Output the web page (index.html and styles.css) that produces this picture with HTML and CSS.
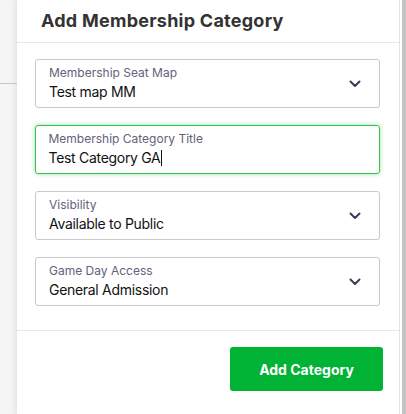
FILE: index.html
```html
<!DOCTYPE html>
<html lang="en">
<head>
<meta charset="utf-8">
<title>Add Membership Category</title>
<link rel="stylesheet" href="styles.css">
</head>
<body>
<div class="page">
  <div class="gutter"><div class="gutter-line"></div></div>
  <section class="panel">
    <header class="panel-header">
      <h1 class="panel-title">Add Membership Category</h1>
    </header>
    <div class="panel-body">
      <div class="field">
        <div class="field-text">
          <div class="field-label">Membership Seat Map</div>
          <div class="field-value">Test map MM</div>
        </div>
        <svg class="chevron" width="12" height="8" viewBox="0 0 12 8"><polyline points="1.5,1.5 6,6 10.5,1.5" fill="none" stroke="#3b3b55" stroke-width="2" stroke-linecap="round" stroke-linejoin="round"/></svg>
      </div>
      <div class="field field-focus">
        <div class="field-text">
          <div class="field-label">Membership Category Title</div>
          <div class="field-value">Test Category GA<span class="caret"></span></div>
        </div>
      </div>
      <div class="field">
        <div class="field-text">
          <div class="field-label">Visibility</div>
          <div class="field-value">Available to Public</div>
        </div>
        <svg class="chevron" width="12" height="8" viewBox="0 0 12 8"><polyline points="1.5,1.5 6,6 10.5,1.5" fill="none" stroke="#3b3b55" stroke-width="2" stroke-linecap="round" stroke-linejoin="round"/></svg>
      </div>
      <div class="field">
        <div class="field-text">
          <div class="field-label">Game Day Access</div>
          <div class="field-value">General Admission</div>
        </div>
        <svg class="chevron" width="12" height="8" viewBox="0 0 12 8"><polyline points="1.5,1.5 6,6 10.5,1.5" fill="none" stroke="#3b3b55" stroke-width="2" stroke-linecap="round" stroke-linejoin="round"/></svg>
      </div>
    </div>
    <footer class="panel-footer">
      <button class="btn-primary" type="button">Add Category</button>
    </footer>
  </section>
  <div class="gap"></div>
  <div class="scrollbar"></div>
</div>
</body>
</html>
```
FILE: styles.css
```css
* { box-sizing: border-box; }
html, body { margin: 0; padding: 0; }
body {
  font-family: Inter, "Noto Sans", "Liberation Sans", sans-serif;
  background: #ffffff;
  overflow: hidden;
}
.page {
  display: flex;
  width: 406px;
  height: 414px;
}
.gutter {
  width: 17px;
  flex: none;
  background: linear-gradient(to right, #f6f6f7 0, #f4f4f5 60%, #ededee 100%);
  padding-top: 83px;
}
.gutter-line {
  height: 1px;
  background: #c6c6d2;
}
.panel {
  width: 383px;
  flex: none;
  background: #ffffff;
  border-right: 1px solid #e4e4e6;
  display: flex;
  flex-direction: column;
  box-shadow: -2px 0 4px rgba(0, 0, 0, 0.04);
}
.panel-header {
  padding: 10px 23px 10px 24px;
  border-bottom: 1px solid #e8e8ea;
}
.panel-title {
  margin: 0;
  font-size: 18px;
  line-height: 22px;
  font-weight: 700;
  letter-spacing: 0.25px;
  color: #333333;
}
.panel-body {
  padding: 16px 19px 24px 18px;
  display: flex;
  flex-direction: column;
  gap: 17px;
  border-bottom: 1px solid #e8e8ea;
}
.field {
  height: 49px;
  border: 1px solid #c9c9cd;
  border-radius: 3px;
  padding: 5px 18px 5px 13px;
  display: flex;
  align-items: center;
}
.field-focus {
  border: 1.5px solid #34c24e;
  box-shadow: 0 0 4px rgba(52, 194, 78, 0.5);
  padding: 4.5px 18px 4.5px 12.5px;
}
.field-text {
  flex: 1;
  display: flex;
  flex-direction: column;
  gap: 1px;
}
.field-label {
  font-size: 12px;
  line-height: 16px;
  color: #62627a;
}
.field-value {
  font-size: 14px;
  line-height: 20px;
  letter-spacing: -0.3px;
  color: #111111;
}
.caret {
  display: inline-block;
  width: 1px;
  height: 16px;
  background: #111111;
  vertical-align: -3px;
  margin-left: 0.5px;
}
.chevron {
  flex: none;
  display: block;
}
.panel-footer {
  padding: 16px 16px 0 0;
  display: flex;
  justify-content: flex-end;
}
.btn-primary {
  height: 44px;
  width: 153px;
  border: none;
  border-radius: 3px;
  background: #00b335;
  color: #ffffff;
  font-family: Inter, "Noto Sans", "Liberation Sans", sans-serif;
  font-size: 14px;
  font-weight: 700;
  padding: 0;
  cursor: pointer;
}
.gap {
  width: 2px;
  flex: none;
  background: #ffffff;
}
.scrollbar {
  width: 4px;
  flex: none;
  background: #c4c4c4;
}
```
